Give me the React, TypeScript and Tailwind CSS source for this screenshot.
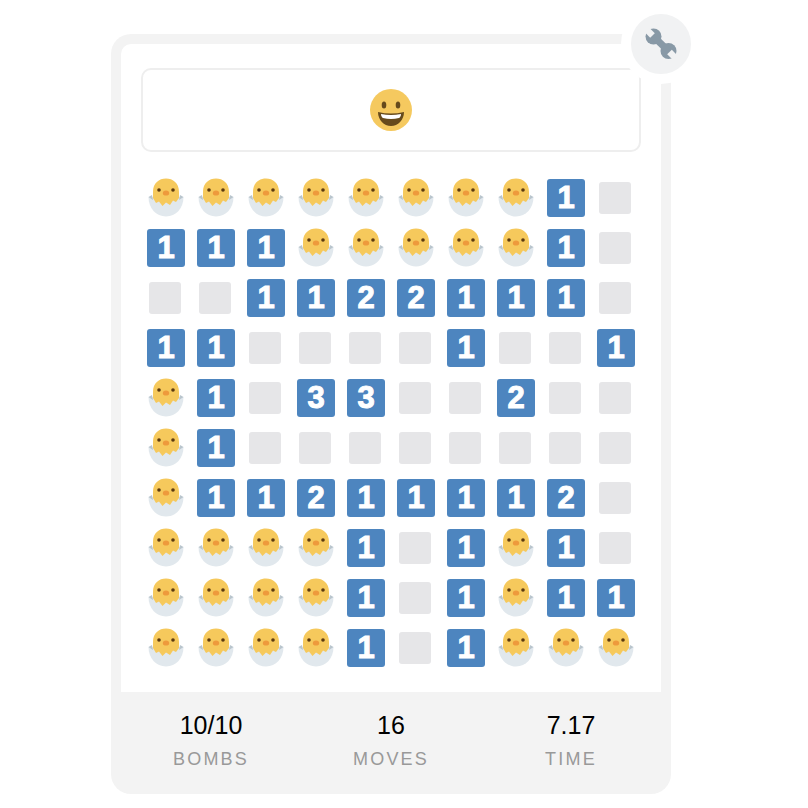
const board = [
  'CCCCCCCC1.',
  '111CCCCC1.',
  '..1122111.',
  '11....1..1',
  'C1.33..2..',
  'C1........',
  'C11211112.',
  'CCCC1.1C1.',
  'CCCC1.1C11',
  'CCCC1.1CCC',
];

function Chick() {
  return (
    <svg width="36" height="40" viewBox="0 0 36 40">
      <path d="M0.5 19 C0.5 30 8 38.5 18 38.5 C28 38.5 35.5 30 35.5 19 C30 19 6 19 0.5 19 Z" fill="#e1e8ed" />
      <path d="M0.5 19 L4 17 L5 22 Z M35.5 19 L32 17 L31 22 Z" fill="#b9c5cd" />
      <path
        d="M5 14 C5 5 11 0.5 18 0.5 C25 0.5 31 5 31 14 L31 20 L28 24 L25 22.5 L22 27 L18 24.5 L14.5 28 L11 23.5 L8 25 L5 20 Z"
        fill="#f6c95c"
      />
      <circle cx="11" cy="12" r="1.8" fill="#5c3a10" />
      <circle cx="25" cy="12" r="1.8" fill="#5c3a10" />
      <ellipse cx="18" cy="15" rx="3.2" ry="2.6" fill="#ee9a3c" />
    </svg>
  );
}

function Smiley() {
  return (
    <svg width="42" height="42" viewBox="0 0 42 42">
      <circle cx="21" cy="21" r="21" fill="#f5c95f" />
      <ellipse cx="14" cy="16" rx="2.3" ry="3.6" fill="#664a1c" />
      <ellipse cx="28" cy="16" rx="2.3" ry="3.6" fill="#664a1c" />
      <path d="M8 23 Q21 26 34 23 C34 31 28 37 21 37 C14 37 8 31 8 23 Z" fill="#664a1c" />
      <path d="M11 25 Q21 27 31 25 C31 27 30 28.5 29 29 Q21 31 13 29 C12 28.5 11 27 11 25 Z" fill="#ffffff" />
    </svg>
  );
}

function Wrench() {
  return (
    <svg width="32" height="32" viewBox="0 0 32 32">
      <circle cx="8.5" cy="8.5" r="8" fill="#8899a6" />
      <circle cx="23.5" cy="23" r="8" fill="#8899a6" />
      <path d="M8.5 8.5 L23.5 23" stroke="#8899a6" strokeWidth="7" />
      <path d="M7.5 7.5 L0 0" stroke="#f1f2f3" strokeWidth="6.5" />
      <path d="M24.5 24 L32 31.5" stroke="#f1f2f3" strokeWidth="6.5" />
    </svg>
  );
}

function Cell({ value }: { value: string }) {
  if (value === 'C') {
    return <Chick />;
  }
  if (value === '.') {
    return <div className="w-8 h-8 mr-[2px] rounded-[3px] bg-[#e6e6e8]" />;
  }
  return (
    <div className="w-[38px] h-[38px] rounded-[3px] bg-[#4d85bf] flex items-center justify-center text-white text-[31px] font-bold [-webkit-text-stroke:1px_white] font-['Liberation_Sans',sans-serif]">
      {value}
    </div>
  );
}

function Stat({ value, label }: { value: string; label: string }) {
  return (
    <div className="flex-1 flex flex-col items-center">
      <div className="text-[25px] leading-[28px] text-black">{value}</div>
      <div className="mt-[9px] text-[18px] leading-[22px] tracking-[2.2px] text-[#999999]">{label}</div>
    </div>
  );
}

export default function App() {
  return (
    <div className="w-[808px] h-[808px] bg-white pl-[111px] pt-[34px] font-['Liberation_Sans',sans-serif]">
      <div className="relative w-[560px] h-[760px] rounded-[20px] bg-[#f3f3f3] pt-[10px] px-[10px]">
        <div className="h-[648px] bg-white rounded-t-[10px] pt-[24px] px-[20px]">
          <div className="h-[84px] border-2 border-[#eeeeee] rounded-[10px] flex items-center justify-center">
            <Smiley />
          </div>
          <div className="mt-[21px] grid grid-cols-10">
            {board.flatMap((row, r) =>
              row.split('').map((value, c) => (
                <div key={`${r}-${c}`} className="h-[50px] flex items-center justify-center">
                  <Cell value={value} />
                </div>
              )),
            )}
          </div>
        </div>
        <div className="flex pt-[19px]">
          <Stat value="10/10" label="BOMBS" />
          <Stat value="16" label="MOVES" />
          <Stat value="7.17" label="TIME" />
        </div>
        <div className="absolute top-[-30px] right-[-30px] w-20 h-20 rounded-full border-[10px] border-white bg-[#f1f2f3] flex items-center justify-center">
          <Wrench />
        </div>
      </div>
    </div>
  );
}
